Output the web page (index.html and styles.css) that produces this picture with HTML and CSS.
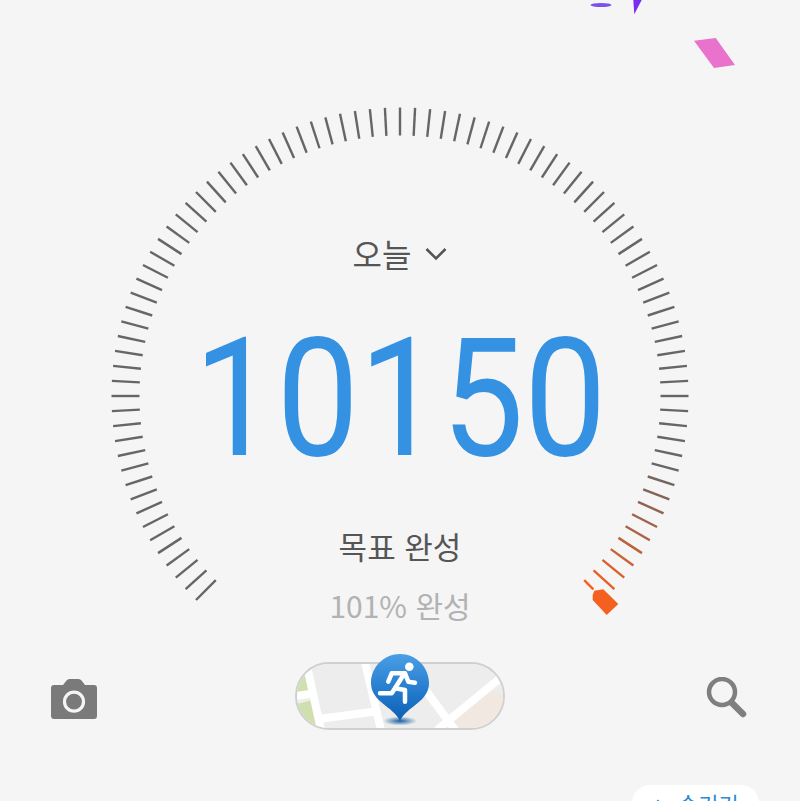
FILE: index.html
```html
<!DOCTYPE html>
<html lang="ko">
<head>
  <meta charset="UTF-8" />
  <meta name="viewport" content="width=device-width, initial-scale=1.0"/>
  <title>걸음 수</title>
  <link rel="stylesheet" href="styles.css">
</head>
<body>
  <svg class="confetti" viewBox="0 0 800 80" aria-hidden="true">
    <ellipse cx="601" cy="5" rx="10.5" ry="2" fill="#7b52ee" />
    <polygon points="633.3,0 641.7,0 634.3,14.3" fill="#7a2cf0" />
    <polygon points="694,40.7 715.7,38 735,65 714,68" fill="#e872cc" />
  </svg>

  <section class="gauge">
    <svg class="ticks" id="ticks" viewBox="0 0 800 640" aria-hidden="true">
      <polygon class="tag" points="592.7,595 594.3,590.7 603.3,589.3 618.3,604 606.7,615 592.7,600" />
    </svg>
    <button class="period">
      <span>오늘</span>
      <svg class="chevron" viewBox="0 0 22 14"><path d="M1.5 2 L11 11.5 L20.5 2" /></svg>
    </button>
    <div class="steps">10150</div>
    <div class="goal">목표 완성</div>
    <div class="percent">101% 완성</div>
  </section>

  <section class="actions">
    <svg class="icon" viewBox="0 0 46 40" aria-label="카메라">
      <path class="icon-fill" d="M3 6 H12 L15.5 1.5 Q16.5 0 18.5 0 H27.5 Q29.5 0 30.5 1.5 L34 6 H43 Q46 6 46 9 V36.5 Q46 40 43 40 H3 Q0 40 0 36.5 V9 Q0 6 3 6 Z" />
      <circle class="lens" cx="23" cy="22.7" r="9.5" />
    </svg>

    <div class="route">
      <svg class="map" viewBox="0 0 206 64" aria-hidden="true">
        <rect width="206" height="64" fill="#ededed" />
        <polygon points="0,14 9,10 12,30 0,32" fill="#cfdfae" />
        <polygon points="0,40 15,36 22,64 0,64" fill="#cfdfae" />
        <polygon points="155,58 193,26 206,30 206,44 188,64 165,64" fill="#f1e9e1" />
        <g class="roads">
          <path d="M9 -2 L24 66" />
          <path d="M-2 32 L13 30" />
          <path d="M22 55 L82 47" />
          <path d="M68 -2 L84 66" />
          <path d="M208 10 L140 66" />
          <path d="M118 12 L158 66" />
        </g>
      </svg>
      <svg class="pin" viewBox="0 0 70 76" aria-hidden="true">
        <defs>
          <linearGradient id="pinFill" x1="0" y1="0" x2="0" y2="1">
            <stop offset="0" stop-color="#4a9fe6" />
            <stop offset="0.7" stop-color="#1b72c6" />
            <stop offset="1" stop-color="#0f5fae" />
          </linearGradient>
          <radialGradient id="pinShadow">
            <stop offset="0" stop-color="#1a5f9f" />
            <stop offset="1" stop-color="#1a5f9f" stop-opacity="0" />
          </radialGradient>
        </defs>
        <ellipse cx="35" cy="69" rx="17" ry="4.5" fill="url(#pinShadow)" />
        <path d="M35 2 C19 2 6 15 6 31 C6 50 28 54 35 69 C42 54 64 50 64 31 C64 15 51 2 35 2 Z" fill="url(#pinFill)" />
        <circle cx="44.3" cy="14.7" r="4.3" fill="#fff" />
        <g class="runner">
          <path d="M23.3 29.7 L26.7 21.3 H40 L43.3 29.7 L50 30.7" />
          <path d="M39 22 L30 36.3 L26.7 41.3 H15" />
          <path d="M30 36.3 L40 38 V49.7" />
        </g>
      </svg>
    </div>

    <svg class="icon search" viewBox="0 0 42 44" aria-label="검색">
      <circle cx="16" cy="15" r="13" />
      <path d="M26 26 L37 37" />
    </svg>
  </section>

  <div class="footer">
    <button class="hide">
      <svg class="chevron-up" viewBox="0 0 12 8"><path d="M1 7 L6 2 L11 7" /></svg>
      <span>숨기기</span>
    </button>
  </div>

  <script src="gauge.js"></script>
</body>
</html>
```

FILE: styles.css
```css
body {
  font-family: "Noto Sans CJK KR", "Noto Sans", sans-serif;
  margin: 0;
  height: 801px;
  overflow: hidden;
  position: relative;
  background: #f5f5f5;
  color: #555;
}

.confetti {
  position: absolute;
  top: 0;
  left: 0;
  width: 800px;
  height: 80px;
}

.gauge {
  position: relative;
  height: 640px;
  display: flex;
  flex-direction: column;
  align-items: center;
  padding-top: 231px;
  box-sizing: border-box;
}

.ticks {
  position: absolute;
  top: 0;
  left: 0;
  width: 800px;
  height: 640px;
}

.tag {
  fill: #f4601f;
}

.period {
  display: flex;
  align-items: center;
  gap: 14px;
  height: 44px;
  padding: 0;
  border: 0;
  background: none;
  font: inherit;
  font-size: 32px;
  color: #555;
}

.chevron {
  width: 22px;
  height: 14px;
  margin-top: 2px;
}

.chevron path {
  fill: none;
  stroke: #555;
  stroke-width: 2.6;
}

.steps {
  font-family: Roboto, sans-serif;
  font-size: 166px;
  line-height: 170px;
  margin-top: 39px;
  color: #3592e2;
  transform: scaleX(0.885);
}

.goal {
  font-size: 31px;
  line-height: 40px;
  margin-top: 42px;
  color: #555;
}

.percent {
  font-size: 30px;
  line-height: 40px;
  margin-top: 19px;
  color: #b2b2b2;
}

.actions {
  display: grid;
  grid-template-columns: 1fr 210px 1fr;
  align-items: center;
  height: 90px;
  margin-top: 11px;
  padding: 0 51px;
}

.icon {
  width: 46px;
  height: 40px;
  margin-top: 6px;
}

.icon-fill {
  fill: #7a7a7a;
}

.lens {
  fill: #7a7a7a;
  stroke: #f5f5f5;
  stroke-width: 3.2;
}

.search {
  width: 42px;
  height: 44px;
  justify-self: end;
  margin-right: 1px;
}

.search circle {
  fill: none;
  stroke: #7f7f7f;
  stroke-width: 4.5;
}

.search path {
  fill: none;
  stroke: #7f7f7f;
  stroke-width: 6.5;
  stroke-linecap: round;
}

.route {
  position: relative;
  width: 206px;
  height: 64px;
  border: 2px solid #cfcfcf;
  border-radius: 34px;
}

.map {
  display: block;
  width: 206px;
  height: 64px;
  border-radius: 32px;
}

.roads path {
  fill: none;
  stroke: #fff;
  stroke-width: 8;
}

.pin {
  position: absolute;
  top: -12px;
  left: 68px;
  width: 70px;
  height: 76px;
}

.runner path {
  fill: none;
  stroke: #fff;
  stroke-width: 4.5;
  stroke-linejoin: round;
  stroke-linecap: round;
}

.footer {
  display: flex;
  justify-content: flex-end;
  padding: 44px 41px 0 0;
}

.hide {
  display: flex;
  align-items: center;
  gap: 14px;
  width: 127px;
  height: 36px;
  padding: 0 0 0 20px;
  box-sizing: border-box;
  border: 0;
  border-radius: 18px;
  background: #fff;
  font: inherit;
  font-size: 22px;
  color: #2a8bd0;
}

.chevron-up {
  width: 12px;
  height: 8px;
}

.chevron-up path {
  fill: none;
  stroke: #2a8bd0;
  stroke-width: 2;
}
```

FILE: gauge.js
```js
// draws the step gauge: one tick every 3 degrees, 270 degree sweep
const ticks = document.getElementById("ticks");
const tag = ticks.querySelector(".tag");
const cx = 400, cy = 396, inner = 260.5, outer = 288.5;
const total = 90, fade = 10;

function mix(t) {
  const a = [102, 102, 102], b = [244, 96, 31];
  return "rgb(" + a.map((v, i) => Math.round(v + (b[i] - v) * t)).join(",") + ")";
}

for (let i = 0; i <= total; i++) {
  const deg = -135 + i * 3;
  const rad = deg * Math.PI / 180;
  const end = i === total ? inner + 13 : outer;
  const line = document.createElementNS("http://www.w3.org/2000/svg", "line");
  line.setAttribute("x1", cx + Math.sin(rad) * inner);
  line.setAttribute("y1", cy - Math.cos(rad) * inner);
  line.setAttribute("x2", cx + Math.sin(rad) * end);
  line.setAttribute("y2", cy - Math.cos(rad) * end);
  line.setAttribute("stroke", mix(Math.max(0, 1 - (total - i) / fade)));
  line.setAttribute("stroke-width", "2.4");
  ticks.insertBefore(line, tag);
}
```
